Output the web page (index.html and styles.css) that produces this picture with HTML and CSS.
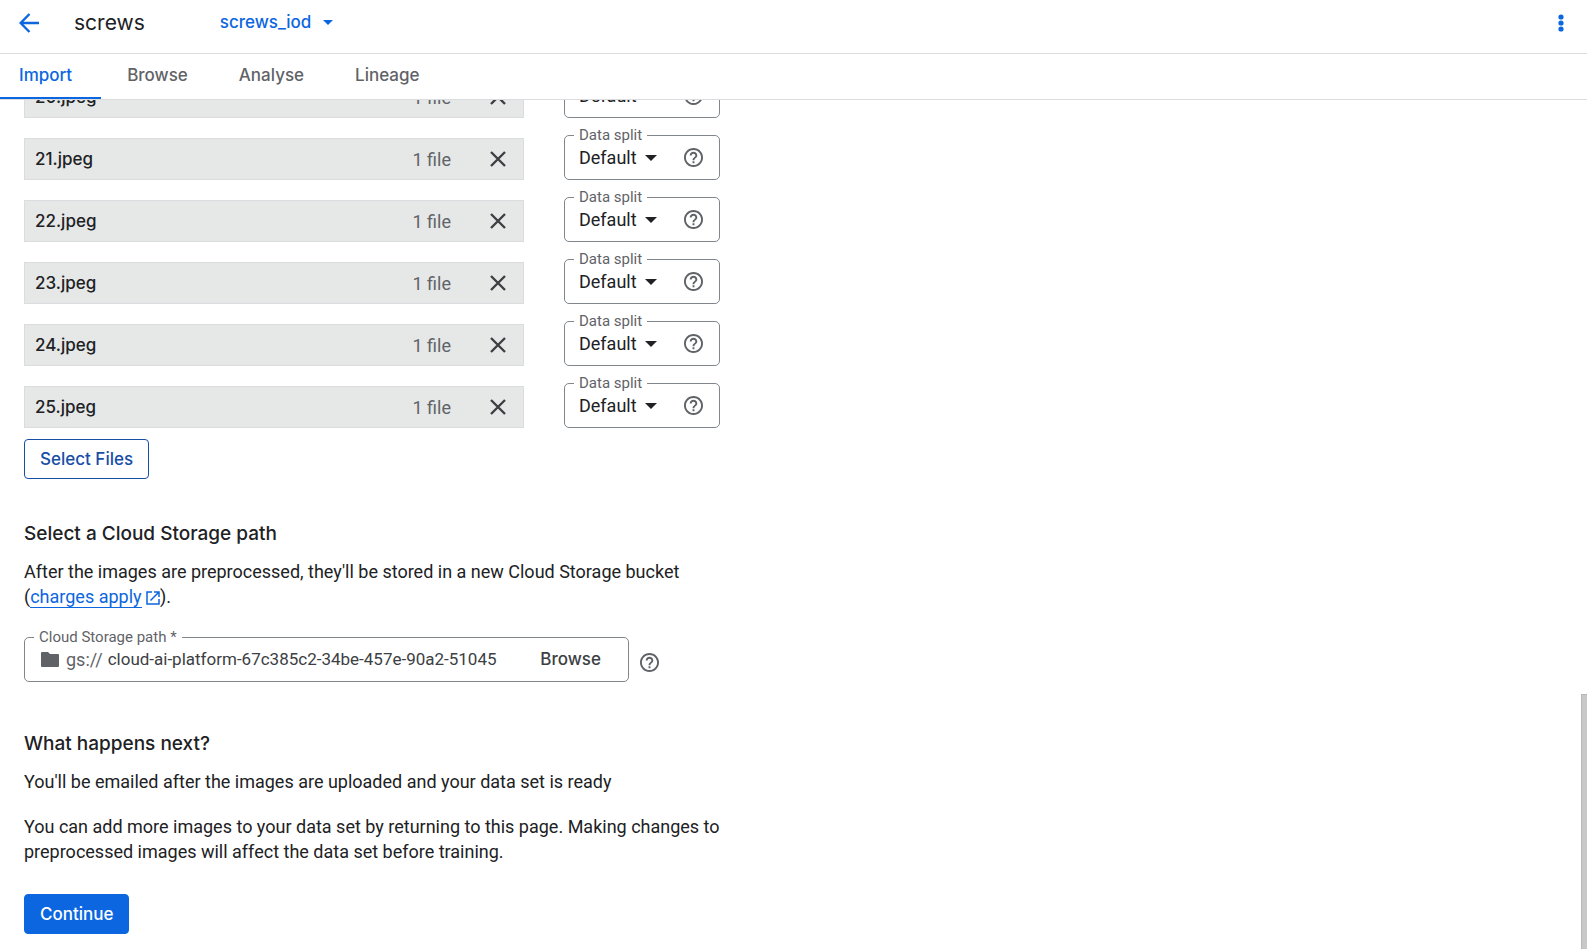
FILE: index.html
```html
<!DOCTYPE html>
<html lang="en">
<head>
    <meta charset="UTF-8">
    <meta name="viewport" content="width=device-width, initial-scale=1.0">
    <title>screws</title>
    <link rel="stylesheet" href="styles.css">
</head>
<body>
    <!-- Shared icons -->
    <svg class="sprite" aria-hidden="true">
        <symbol id="icon-close" viewBox="0 0 16 16">
            <path d="M1 1l14 14M15 1L1 15" fill="none" stroke="currentColor" stroke-width="2.400"/>
        </symbol>
        <symbol id="icon-help" viewBox="2 2 20 20">
            <path fill="currentColor" d="M11 18h2v-2h-2v2zm1-16C6.48 2 2 6.48 2 12s4.480 10 10 10 10-4.480 10-10S17.520 2 12 2zm0 18c-4.410 0-8-3.590-8-8s3.590-8 8-8 8 3.590 8 8-3.590 8-8 8zm0-14c-2.210 0-4 1.790-4 4h2c0-1.100.9-2 2-2s2 .9 2 2c0 2-3 1.750-3 5h2c0-2.250 3-2.500 3-5 0-2.210-1.790-4-4-4z"/>
        </symbol>
        <symbol id="icon-down" viewBox="0 0 12 6">
            <path fill="currentColor" d="M0 0h12L6 6z"/>
        </symbol>
    </svg>

    <header class="topbar">
        <a class="back" href="#" aria-label="Back">
            <svg width="20" height="20" viewBox="0 0 20 20">
                <path d="M20 10H2M10.500 1L1.600 10l8.900 9" fill="none" stroke="currentColor" stroke-width="2.400"/>
            </svg>
        </a>
        <h1>screws</h1>
        <button class="version" type="button">
            screws_iod
            <svg width="10" height="5"><use href="#icon-down"/></svg>
        </button>
        <button class="more" type="button" aria-label="More actions">
            <svg width="6" height="18" viewBox="0 0 6 18" fill="currentColor">
                <circle cx="3" cy="3" r="2.600"/>
                <circle cx="3" cy="9" r="2.600"/>
                <circle cx="3" cy="15" r="2.600"/>
            </svg>
        </button>
    </header>

    <nav class="tabs">
        <a class="active" href="#">Import</a>
        <a href="#">Browse</a>
        <a href="#">Analyse</a>
        <a href="#">Lineage</a>
    </nav>

    <main>
        <div class="content">
            <ul class="files">
                <li>
                    <div class="file">
                        <span class="name">20.jpeg</span>
                        <span class="count">1 file</span>
                        <button type="button" aria-label="Remove 20.jpeg"><svg width="16" height="16"><use href="#icon-close"/></svg></button>
                    </div>
                    <div class="split">
                        <label for="split-20">Data split</label>
                        <select id="split-20"><option>Default</option></select>
                        <svg class="arrow" width="12" height="6"><use href="#icon-down"/></svg>
                        <svg class="help" width="19" height="19"><use href="#icon-help"/></svg>
                    </div>
                </li>
                <li>
                    <div class="file">
                        <span class="name">21.jpeg</span>
                        <span class="count">1 file</span>
                        <button type="button" aria-label="Remove 21.jpeg"><svg width="16" height="16"><use href="#icon-close"/></svg></button>
                    </div>
                    <div class="split">
                        <label for="split-21">Data split</label>
                        <select id="split-21"><option>Default</option></select>
                        <svg class="arrow" width="12" height="6"><use href="#icon-down"/></svg>
                        <svg class="help" width="19" height="19"><use href="#icon-help"/></svg>
                    </div>
                </li>
                <li>
                    <div class="file">
                        <span class="name">22.jpeg</span>
                        <span class="count">1 file</span>
                        <button type="button" aria-label="Remove 22.jpeg"><svg width="16" height="16"><use href="#icon-close"/></svg></button>
                    </div>
                    <div class="split">
                        <label for="split-22">Data split</label>
                        <select id="split-22"><option>Default</option></select>
                        <svg class="arrow" width="12" height="6"><use href="#icon-down"/></svg>
                        <svg class="help" width="19" height="19"><use href="#icon-help"/></svg>
                    </div>
                </li>
                <li>
                    <div class="file">
                        <span class="name">23.jpeg</span>
                        <span class="count">1 file</span>
                        <button type="button" aria-label="Remove 23.jpeg"><svg width="16" height="16"><use href="#icon-close"/></svg></button>
                    </div>
                    <div class="split">
                        <label for="split-23">Data split</label>
                        <select id="split-23"><option>Default</option></select>
                        <svg class="arrow" width="12" height="6"><use href="#icon-down"/></svg>
                        <svg class="help" width="19" height="19"><use href="#icon-help"/></svg>
                    </div>
                </li>
                <li>
                    <div class="file">
                        <span class="name">24.jpeg</span>
                        <span class="count">1 file</span>
                        <button type="button" aria-label="Remove 24.jpeg"><svg width="16" height="16"><use href="#icon-close"/></svg></button>
                    </div>
                    <div class="split">
                        <label for="split-24">Data split</label>
                        <select id="split-24"><option>Default</option></select>
                        <svg class="arrow" width="12" height="6"><use href="#icon-down"/></svg>
                        <svg class="help" width="19" height="19"><use href="#icon-help"/></svg>
                    </div>
                </li>
                <li>
                    <div class="file">
                        <span class="name">25.jpeg</span>
                        <span class="count">1 file</span>
                        <button type="button" aria-label="Remove 25.jpeg"><svg width="16" height="16"><use href="#icon-close"/></svg></button>
                    </div>
                    <div class="split">
                        <label for="split-25">Data split</label>
                        <select id="split-25"><option>Default</option></select>
                        <svg class="arrow" width="12" height="6"><use href="#icon-down"/></svg>
                        <svg class="help" width="19" height="19"><use href="#icon-help"/></svg>
                    </div>
                </li>
            </ul>
            <button class="btn outline" type="button">Select Files</button>

            <section>
                <h2>Select a Cloud Storage path</h2>
                <p>After the images are preprocessed, they'll be stored in a new Cloud Storage bucket (<a class="link" href="#">charges apply</a>
                    <svg class="external" width="14" height="14" viewBox="0 0 14 14" fill="none" stroke="currentColor" stroke-width="1.500"><path d="M6 1H1v12h12V8M8 1h5v5M13 1L4.500 9.500"/></svg>).</p>
                <div class="path-row">
                    <div class="path">
                        <label for="path">Cloud Storage path *</label>
                        <svg width="18" height="15" viewBox="0 0 18 15"><path fill="currentColor" d="M1 0h6l2 2h8a1 1 0 0 1 1 1v11a1 1 0 0 1-1 1H1a1 1 0 0 1-1-1V1a1 1 0 0 1 1-1z"/></svg>
                        <span>gs://</span>
                        <input id="path" type="text" value="cloud-ai-platform-67c385c2-34be-457e-90a2-51045">
                        <button type="button">Browse</button>
                    </div>
                    <svg class="help" width="19" height="19"><use href="#icon-help"/></svg>
                </div>
            </section>

            <section>
                <h2>What happens next?</h2>
                <p>You'll be emailed after the images are uploaded and your data set is ready</p>
                <p>You can add more images to your data set by returning to this page. Making changes to preprocessed images will affect the data set before training.</p>
                <button class="btn primary" type="button">Continue</button>
            </section>
        </div>
        <div class="scroll-thumb"></div>
    </main>
</body>
</html>
```

FILE: styles.css
```css
* {
    box-sizing: border-box;
}

body {
    display: flex;
    flex-direction: column;
    height: 100vh;
    margin: 0;
    overflow: hidden;
    background: #fff;
    color: #202124;
    font-family: Roboto, "Liberation Sans", sans-serif;
    font-size: 18px;
    line-height: 25px;
}

.sprite {
    display: none;
}

button, select, input {
    padding: 0;
    border: 0;
    background: none;
    color: inherit;
    font: inherit;
}

svg {
    flex: none;
}

/* Header */
.topbar {
    display: flex;
    align-items: center;
    height: 54px;
    padding: 0 23px 8px 19px;
    border-bottom: 1px solid #dadce0;
}

.back, .version, .more {
    display: flex;
    align-items: center;
    color: #0b66e0;
}

.topbar h1 {
    margin: 0 75px 0 35px;
    font-family: Inter, sans-serif;
    font-size: 21px;
    font-weight: 400;
}

.version {
    gap: 12px;
    font-family: Inter, sans-serif;
    font-size: 17px;
    font-weight: 500;
}

.more {
    margin-left: auto;
}

.tabs {
    display: flex;
    height: 46px;
    border-bottom: 1px solid #dadce0;
}

.tabs a {
    padding: 9px 25px 0 26px;
    color: #5f6368;
    font-family: Inter, sans-serif;
    font-size: 17px;
    font-weight: 500;
    text-decoration: none;
}

.tabs .active {
    padding-right: 29px;
    padding-left: 19px;
    border-bottom: 2px solid #0b66e0;
    color: #0b66e0;
}

/* Page content */
main {
    position: relative;
    flex: 1;
    overflow: hidden;
}

.content {
    max-width: 744px;
    padding: 0 24px;
}

.scroll-thumb {
    position: absolute;
    right: 0;
    bottom: 0;
    width: 6px;
    height: 30%;
    border: 1px solid #b8b8b8;
    border-width: 1px 0 0 1px;
    background: #c8c8c8;
}

/* The list is scrolled under the tabs */
.files {
    display: flex;
    flex-direction: column;
    gap: 17px;
    margin: -27px 0 11px;
    padding: 0;
    list-style: none;
}

.files li {
    display: flex;
    align-items: flex-end;
    gap: 40px;
}

.file {
    display: flex;
    align-items: center;
    width: 500px;
    height: 42px;
    padding: 0 17px 0 10px;
    border: 1px solid #dadce0;
    background: #e6e8e7;
}

.name {
    flex: 1;
    font-family: Inter, sans-serif;
    font-size: 17px;
    font-weight: 500;
}

.count {
    margin-right: 39px;
    color: #5f6368;
}

.file button {
    display: flex;
    color: #3c4043;
}

.split, .path {
    position: relative;
    display: flex;
    align-items: center;
    height: 45px;
    border: 1px solid #80868b;
    border-radius: 5px;
}

.split {
    width: 156px;
    padding: 0 16px 0 14px;
}

.split label, .path label {
    position: absolute;
    top: -10px;
    left: 9px;
    padding: 0 5px;
    background: #fff;
    color: #5f6368;
    font-size: 15px;
    line-height: 18px;
}

.split select {
    width: 66px;
    appearance: none;
}

.split .help {
    margin-left: auto;
}

.help {
    color: #5f6368;
}

/* Buttons */
.btn {
    display: block;
    height: 40px;
    padding: 0 15px;
    border: 1px solid #174ea6;
    border-radius: 4px;
    font-family: Inter, sans-serif;
    font-size: 17px;
    font-weight: 500;
}

.outline {
    color: #174ea6;
}

.primary {
    border-color: #0b66e0;
    background: #0b66e0;
    color: #fff;
}

/* Sections */
section {
    margin-top: 42px;
}

section + section {
    margin-top: 49px;
}

h2 {
    margin: 0 0 13px;
    font-family: Inter, sans-serif;
    font-size: 19px;
    font-weight: 500;
}

p {
    margin: 0 0 20px;
}

.link {
    border-bottom: 1px solid #0b66e0;
    color: #0b66e0;
    text-decoration: none;
}

.external {
    color: #0b66e0;
    vertical-align: -2px;
}

.path-row {
    display: flex;
    align-items: center;
    gap: 11px;
    margin-top: 28px;
}

.path-row > .help {
    margin-top: 5px;
}

.path {
    width: 605px;
    padding: 0 27px 0 16px;
    color: #5f6368;
}

.path span {
    margin: 0 5px 0 7px;
}

.path input {
    flex: 1;
    min-width: 0;
    margin-right: 30px;
    color: #3c4043;
    font-size: 17px;
}

.path button {
    color: #3c4043;
    font-family: Inter, sans-serif;
    font-size: 17px;
    font-weight: 500;
}

.primary {
    margin-top: 30px;
}
```
